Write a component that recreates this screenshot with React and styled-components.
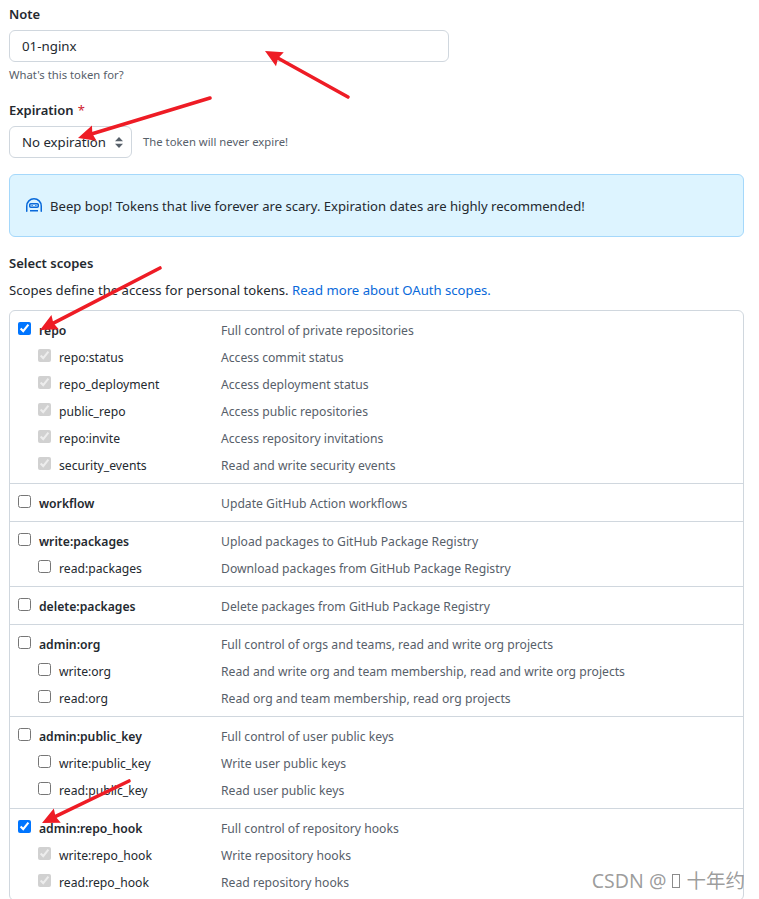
import styled, { createGlobalStyle } from "styled-components"

const GlobalStyle = createGlobalStyle`
    html, body {
        margin: 0;
        height: 899px;
        overflow: hidden;
        background: #ffffff;
    }
    body {
        font-family: "Noto Sans", "Liberation Sans", sans-serif;
        color: #24292f;
    }
`

const Page = styled.div`
    position: relative;
    height: 899px;
    overflow: hidden;
    padding: 5px 15px 0 9px;
    box-sizing: border-box;
`

const Label = styled.div`
    font-size: 13px;
    font-weight: 600;
    line-height: 18px;
    color: #24292f;
`

const Required = styled.span`
    color: #cf222e;
    font-weight: 400;
    margin-left: 4px;
`

const TextBox = styled.div`
    width: 440px;
    height: 32px;
    box-sizing: border-box;
    margin-top: 7px;
    padding: 0 12px;
    display: flex;
    align-items: center;
    border: 1px solid #d0d7de;
    border-radius: 6px;
    font-size: 13.3px;
`

const Hint = styled.div`
    font-size: 11.3px;
    line-height: 16px;
    color: #57606a;
    margin-top: ${(p) => p.$top || 0}px;
`

const ExpirationLabel = styled(Label)`
    margin-top: 18px;
`

const ExpirationRow = styled.div`
    display: flex;
    align-items: center;
    gap: 11px;
    margin-top: 7px;
`

const SelectBox = styled.div`
    width: 123px;
    height: 32px;
    box-sizing: border-box;
    padding: 0 8px 0 12px;
    display: flex;
    align-items: center;
    justify-content: space-between;
    border: 1px solid #d0d7de;
    border-radius: 6px;
    font-size: 13.2px;
`

const Banner = styled.div`
    height: 63px;
    box-sizing: border-box;
    margin-top: 16px;
    padding: 0 16px;
    display: flex;
    align-items: center;
    gap: 8px;
    background: #ddf4ff;
    border: 1px solid #a5d8fb;
    border-radius: 6px;
    font-size: 13.1px;
`

const ScopesTitle = styled(Label)`
    margin-top: 17px;
`

const ScopesNote = styled.div`
    font-size: 13.13px;
    line-height: 18px;
    margin-top: 9px;
`

const Link = styled.a`
    color: #0969da;
    text-decoration: none;
`

const ScopeTable = styled.div`
    margin-top: 11px;
    border: 1px solid #d0d7de;
    border-radius: 6px;
`

const ScopeGroup = styled.div`
    padding: 6px 0 4px;
    border-top: ${(p) => (p.$first ? "none" : "1px solid #d0d7de")};
`

const ScopeRow = styled.div`
    display: grid;
    grid-template-columns: 211px 1fr;
    align-items: center;
    height: 27px;
    font-size: 12.18px;
`

const ScopeName = styled.label`
    display: flex;
    align-items: center;
    gap: 8px;
    padding-left: ${(p) => (p.$sub ? 28 : 8)}px;
    font-weight: ${(p) => (p.$sub ? 400 : 600)};
    color: #24292f;
`

const Check = styled.input`
    width: 13px;
    height: 13px;
    margin: -4px 0 0;
    flex: none;
`

const ScopeDesc = styled.span`
    color: #57606a;
`

const ArrowLayer = styled.svg`
    position: absolute;
    top: 0;
    left: 0;
    pointer-events: none;
`

const Watermark = styled.div`
    position: absolute;
    right: 14px;
    bottom: 6px;
    display: flex;
    align-items: center;
    gap: 6px;
    font-family: "Noto Sans", "Noto Sans CJK SC", sans-serif;
    font-size: 19.5px;
    line-height: 24px;
    color: rgba(90, 90, 90, 0.6);
`

const WatermarkBox = styled.span`
    width: 8px;
    height: 14px;
    box-sizing: border-box;
    border: 1px solid rgba(90, 90, 90, 0.7);
`

const scopes = [
    { checked: true, name: "repo", desc: "Full control of private repositories", subs: [
        ["repo:status", "Access commit status"],
        ["repo_deployment", "Access deployment status"],
        ["public_repo", "Access public repositories"],
        ["repo:invite", "Access repository invitations"],
        ["security_events", "Read and write security events"],
    ] },
    { name: "workflow", desc: "Update GitHub Action workflows", subs: [] },
    { name: "write:packages", desc: "Upload packages to GitHub Package Registry", subs: [
        ["read:packages", "Download packages from GitHub Package Registry"],
    ] },
    { name: "delete:packages", desc: "Delete packages from GitHub Package Registry", subs: [] },
    { name: "admin:org", desc: "Full control of orgs and teams, read and write org projects", subs: [
        ["write:org", "Read and write org and team membership, read and write org projects"],
        ["read:org", "Read org and team membership, read org projects"],
    ] },
    { name: "admin:public_key", desc: "Full control of user public keys", subs: [
        ["write:public_key", "Write user public keys"],
        ["read:public_key", "Read user public keys"],
    ] },
    { checked: true, name: "admin:repo_hook", desc: "Full control of repository hooks", subs: [
        ["write:repo_hook", "Write repository hooks"],
        ["read:repo_hook", "Read repository hooks"],
    ] },
]

const arrows = [
    { tail: [348, 97], tip: [265, 51] },
    { tail: [210, 98], tip: [78, 138] },
    { tail: [160, 268], tip: [40, 330] },
    { tail: [129, 781], tip: [42, 823] },
]

function Arrow({ tail, tip }) {
    const angle = Math.atan2(tail[1] - tip[1], tail[0] - tip[0])
    const at = (len, off) => [
        tip[0] + Math.cos(angle) * len - Math.sin(angle) * off,
        tip[1] + Math.sin(angle) * len + Math.cos(angle) * off,
    ]
    const head = [tip, at(17, 8), at(15, 0), at(17, -8)].map((p) => p.join(",")).join(" ")
    const neck = at(14, 0)
    return (
        <g>
            <line x1={tail[0]} y1={tail[1]} x2={neck[0]} y2={neck[1]} stroke="#ee1c25" strokeWidth="3.6" strokeLinecap="round" />
            <polygon points={head} fill="#ee1c25" />
        </g>
    )
}

function RobotIcon() {
    return (
        <svg width="16" height="16" viewBox="0 0 16 16" fill="#0969da">
            <path d="M0 8a8 8 0 0 1 16 0v5.25a.75.75 0 0 1-1.5 0V8a6.5 6.5 0 1 0-13 0v5.25a.75.75 0 0 1-1.5 0Z" />
            <path fillRule="evenodd" d="M4.75 5h6.5C12.2 5 13 5.8 13 6.75v1.5C13 9.2 12.2 10 11.25 10h-6.5C3.8 10 3 9.2 3 8.25v-1.5C3 5.8 3.8 5 4.75 5Zm0 1.5a.25.25 0 0 0-.25.25v1.5c0 .14.11.25.25.25h6.5a.25.25 0 0 0 .25-.25v-1.5a.25.25 0 0 0-.25-.25Z" />
            <path d="M5.500 7h1.200v1H5.500ZM9.300 7h1.200v1H9.300Z" />
            <path d="M4 12h8v1.500H4Z" />
        </svg>
    )
}

function SelectArrows() {
    return (
        <svg width="8" height="11" viewBox="0 0 8 11" fill="#57606a">
            <path d="M4 0 8 4.300H0Z" />
            <path d="M4 11 0 6.700H8Z" />
        </svg>
    )
}

function Scope({ name, desc, checked, sub }) {
    return (
        <ScopeRow>
            <ScopeName $sub={sub}>
                <Check type="checkbox" checked={!!checked} disabled={sub && checked} readOnly />
                {name}
            </ScopeName>
            <ScopeDesc>{desc}</ScopeDesc>
        </ScopeRow>
    )
}

function App() {
    return (
        <Page>
            <GlobalStyle />
            <Label>Note</Label>
            <TextBox>01-nginx</TextBox>
            <Hint $top={5}>What's this token for?</Hint>
            <ExpirationLabel>Expiration<Required>*</Required></ExpirationLabel>
            <ExpirationRow>
                <SelectBox>No expiration<SelectArrows /></SelectBox>
                <Hint>The token will never expire!</Hint>
            </ExpirationRow>
            <Banner><RobotIcon />Beep bop! Tokens that live forever are scary. Expiration dates are highly recommended!</Banner>
            <ScopesTitle>Select scopes</ScopesTitle>
            <ScopesNote>
                Scopes define the access for personal tokens. <Link href="#">Read more about OAuth scopes.</Link>
            </ScopesNote>
            <ScopeTable>
                {scopes.map((group, i) => (
                    <ScopeGroup key={group.name} $first={i === 0}>
                        <Scope name={group.name} desc={group.desc} checked={group.checked} />
                        {group.subs.map(([name, desc]) => (
                            <Scope key={name} name={name} desc={desc} checked={group.checked} sub />
                        ))}
                    </ScopeGroup>
                ))}
            </ScopeTable>
            <ArrowLayer width="759" height="899">
                {arrows.map((a) => <Arrow key={a.tip.join()} tail={a.tail} tip={a.tip} />)}
            </ArrowLayer>
            <Watermark>CSDN @<WatermarkBox />十年约</Watermark>
        </Page>
    )
}

export default App
